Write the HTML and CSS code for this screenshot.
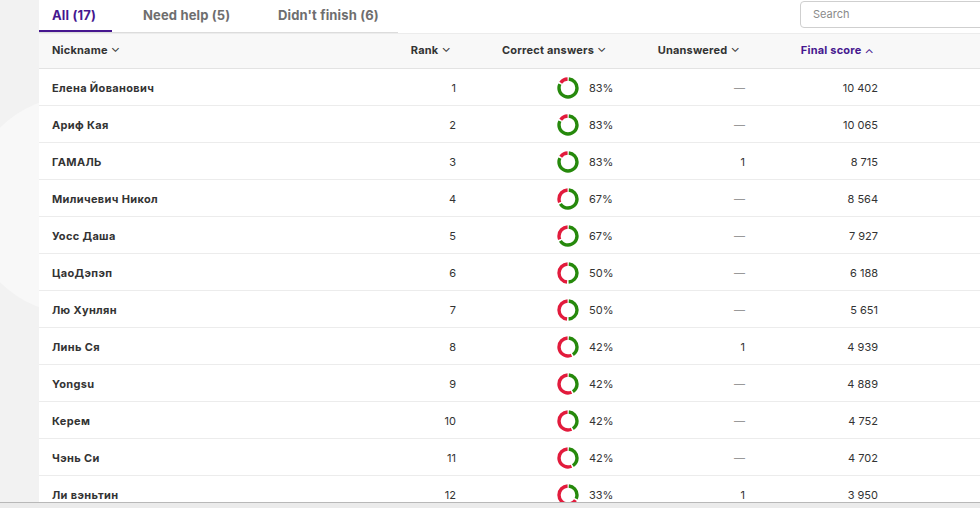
FILE: index.html
```html
<!DOCTYPE html>
<html>
<head>
<meta charset="utf-8">
<link rel="stylesheet" href="styles.css">
</head>
<body>
<div class="page">
  <div class="blob"></div>
  <div class="card">
    <div class="topbar">
      <div class="tabs">
        <div class="tab tab-all active">All (17)</div>
        <div class="tab tab-help">Need help (5)</div>
        <div class="tab tab-fin">Didn't finish (6)</div>
      </div>
      <div class="search">Search</div>
    </div>
    <div class="grid" id="grid">
      <div class="hc c-name">Nickname <span class="chev">&#8964;</span></div>
      <div class="hc c-rank">Rank <span class="chev">&#8964;</span></div>
      <div class="hc c-corr">Correct answers <span class="chev">&#8964;</span></div>
      <div class="hc c-unans">Unanswered <span class="chev">&#8964;</span></div>
      <div class="hc c-final active">Final score <span class="chev up">&#8963;</span></div>
      <div class="hc c-rest"></div>
    </div>
  </div>
  <div class="bottombar"></div>
</div>
<script src="app.js"></script>
</body>
</html>
```
FILE: app.js
```js
const rows = [
  ["Елена Йованович", 1, 83, "—", "10 402"],
  ["Ариф Кая", 2, 83, "—", "10 065"],
  ["ГАМАЛЬ", 3, 83, "1", "8 715"],
  ["Миличевич Никол", 4, 67, "—", "8 564"],
  ["Уосс Даша", 5, 67, "—", "7 927"],
  ["ЦаоДэпэп", 6, 50, "—", "6 188"],
  ["Лю Хунлян", 7, 50, "—", "5 651"],
  ["Линь Ся", 8, 42, "1", "4 939"],
  ["Yongsu", 9, 42, "—", "4 889"],
  ["Керем", 10, 42, "—", "4 752"],
  ["Чэнь Си", 11, 42, "—", "4 702"],
  ["Ли вэньтин", 12, 33, "1", "3 950"]
];
const C = 2 * Math.PI * 9;
const gap = 1.6;
function donut(p) {
  const g = p / 100 * C;
  return `<svg class="donut" width="22" height="22" viewBox="0 0 22 22">
    <g transform="rotate(-90 11 11)" fill="none" stroke-width="3.4">
      <circle cx="11" cy="11" r="9" stroke="#26890c" stroke-dasharray="${g - gap} ${C}" stroke-dashoffset="${-gap / 2}"/>
      <circle cx="11" cy="11" r="9" stroke="#e21b3c" stroke-dasharray="${C - g - gap} ${C}" stroke-dashoffset="${-(g + gap / 2)}"/>
    </g></svg>`;
}
const grid = document.getElementById("grid");
let html = "";
for (const r of rows) {
  html += `<div class="cell c-name name">${r[0]}</div>
  <div class="cell c-rank">${r[1]}</div>
  <div class="cell c-corr">${donut(r[2])}<span class="pct">${r[2]}%</span></div>
  <div class="cell c-unans${r[3] === "—" ? " dash" : ""}">${r[3]}</div>
  <div class="cell c-final">${r[4]}</div>
  <div class="cell c-rest"></div>`;
}
grid.insertAdjacentHTML("beforeend", html);
```
FILE: styles.css
```css
* { box-sizing: border-box; }
html, body { margin: 0; padding: 0; }
body {
  width: 980px;
  height: 508px;
  overflow: hidden;
  background: #f2f2f2;
  font-family: Inter, "Noto Sans", sans-serif;
  color: #333;
}
.page {
  position: relative;
  height: 508px;
  display: flex;
  flex-direction: column;
  padding-left: 39px;
}
.blob {
  position: absolute;
  left: -32px;
  top: 96px;
  width: 218px;
  height: 218px;
  border-radius: 50%;
  background: #f8f8f8;
}
.card {
  position: relative;
  flex: 1;
  background: #fff;
  overflow: hidden;
}
.topbar {
  height: 33px;
  display: flex;
  align-items: flex-start;
  justify-content: space-between;
}
.tabs {
  display: flex;
  flex-shrink: 0;
  width: 359px;
  height: 33px;
  border-bottom: 1px solid #dcdcdc;
}
.tab {
  flex-shrink: 0;
  white-space: nowrap;
  height: 32px;
  line-height: 30px;
  font-size: 13px;
  font-weight: 700;
  color: #6e6e6e;
  letter-spacing: 0.15px;
}
.tab-all { width: 73px; padding-left: 13px; }
.tab-help { width: 135px; padding-left: 31px; }
.tab-fin { padding-left: 31px; }
.tab.active {
  color: #46178f;
  border-bottom: 2px solid #46178f;
}
.search {
  width: 190px;
  height: 27px;
  margin-top: 1px;
  margin-right: -10px;
  border: 1px solid #cfcfcf;
  border-radius: 4px;
  font-size: 11px;
  line-height: 25px;
  color: #8a8a8a;
  padding-left: 12px;
}
.grid {
  display: grid;
  grid-template-columns: 361px 70px 170px 120px 132px 1fr;
  grid-auto-rows: 37px;
  grid-template-rows: 36px;
  font-size: 11px;
}
.hc {
  background: #f8f8f8;
  border-bottom: 1px solid #e3e3e3;
  border-top: 1px solid #ececec;
  font-weight: 700;
  display: flex;
  align-items: center;
  white-space: nowrap;
  letter-spacing: 0.2px;
  padding-bottom: 2px;
}
.hc.active { color: #46178f; }
.chev {
  font-weight: 400;
  font-size: 12px;
  margin-left: 3px;
  display: inline-block;
  transform: translateY(-3px);
}
.chev.up { transform: translateY(3px); }
.cell {
  border-bottom: 1px solid #ececec;
  display: flex;
  align-items: center;
  white-space: nowrap;
  padding-top: 1px;
}
.c-name { padding-left: 13px; }
.name { font-weight: 700; letter-spacing: 0.35px; }
.c-rank { justify-content: flex-end; padding-right: 14px; }
.hc.c-rank { padding-right: 19px; }
.c-corr { padding-left: 87px; }
.hc.c-corr { padding-left: 32px; }
.c-unans { justify-content: flex-end; padding-right: 15px; }
.hc.c-unans { padding-right: 20px; }
.dash { color: #999; }
.c-final { justify-content: flex-end; padding-right: 14px; }
.hc.c-final { padding-right: 18px; }
.donut { display: block; }
.pct { margin-left: 10px; font-weight: 400; }
.bottombar {
  position: relative;
  height: 6px;
  margin-left: -39px;
  background: #ebebeb;
  border-top: 1px solid #b8b8b8;
}
```
